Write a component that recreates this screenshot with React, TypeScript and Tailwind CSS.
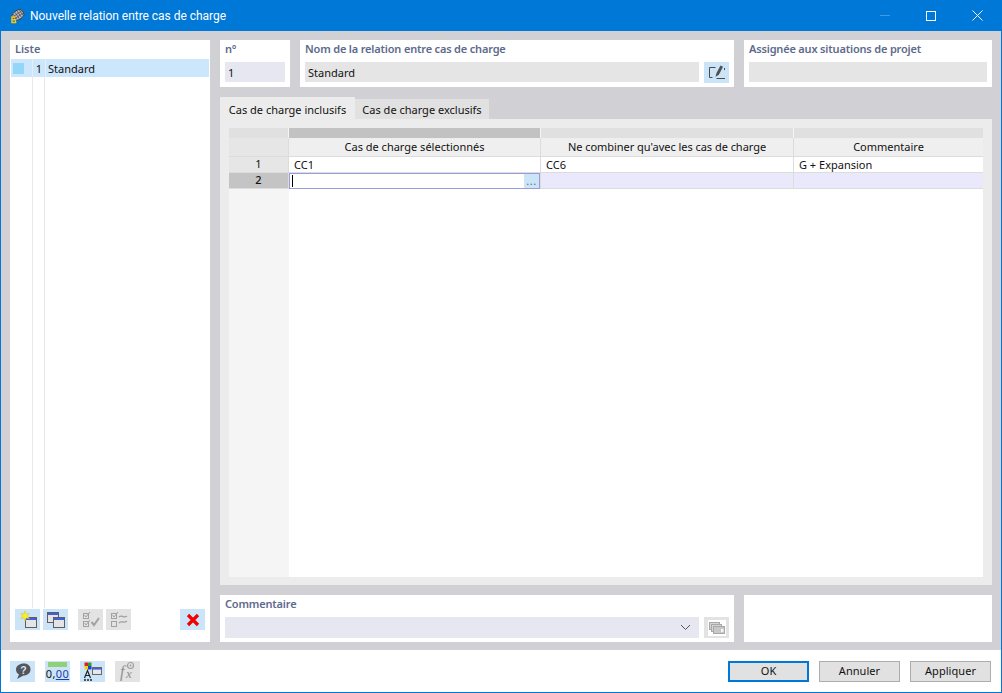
import React from "react";

const font = { fontFamily: '"Noto Sans", "Open Sans", sans-serif' };

function TitleIcon() {
  return (
    <svg width="16" height="16" viewBox="0 0 16 16">
      <g transform="rotate(-35 9 7)">
        <rect x="3" y="2.5" width="12" height="9" rx="4" fill="#b5b9c2" stroke="#3a3d42" strokeWidth="0.9" />
        <path d="M5.5 3 V11 M8 3 V11 M10.5 3 V11 M13 3 V11 M3 5.7 H15 M3 8.3 H15" stroke="#4a4d52" strokeWidth="0.7" />
      </g>
      <path d="M6.5 9 H3 V14.5 H6.5 V11.7 H3" fill="none" stroke="#f5c518" strokeWidth="1.5" />
    </svg>
  );
}

function EditIcon() {
  return (
    <svg width="20" height="18" viewBox="0 0 20 18">
      <path d="M8.5 3.5 H2.5 V13.5 H5.5" fill="none" stroke="#4a4a4a" strokeWidth="1" />
      <path d="M9.5 14.5 H18" stroke="#4a4a4a" strokeWidth="1" />
      <path d="M17.5 4 V6" stroke="#4a4a4a" strokeWidth="1" />
      <path d="M8.5 13 L9.5 9 L13.5 1.5 L16 2.8 L12 10.5 Z" fill="#505050" />
    </svg>
  );
}

function Win({ x, y }: { x: number; y: number }) {
  return (
    <g transform={`translate(${x} ${y})`}>
      <rect x="0.5" y="0.5" width="11" height="10" fill="#e4e4e4" stroke="#5e5e5e" />
      <rect x="1" y="1" width="10" height="2" fill="#3f5fe0" />
    </g>
  );
}

function NewIcon() {
  return (
    <svg width="20" height="18" viewBox="0 0 20 18">
      <Win x={7} y={6} />
      <path d="M7 0 L8.2 3 L11.5 2.4 L9.4 5 L11.5 7.8 L8.2 7 L7 10 L5.8 7 L2.5 7.8 L4.6 5 L2.5 2.4 L5.8 3 Z" fill="#f7ee2e" stroke="#c9b820" strokeWidth="0.4" />
    </svg>
  );
}

function CopyIcon() {
  return (
    <svg width="20" height="18" viewBox="0 0 20 18">
      <Win x={1} y={1} />
      <Win x={7} y={6} />
    </svg>
  );
}

function CheckAllIcon() {
  return (
    <svg width="20" height="18" viewBox="0 0 20 18" fill="none" stroke="#a2a2a2" strokeWidth="1">
      <rect x="2.5" y="2.5" width="5" height="5" />
      <rect x="2.5" y="10.5" width="5" height="5" />
      <path d="M3.5 4 L5 6 L9 1 M3.5 12 L5 14 L9 9" />
      <path d="M10.5 11 L13 14 L18 7" strokeWidth="2" />
    </svg>
  );
}

function CheckSwapIcon() {
  return (
    <svg width="20" height="18" viewBox="0 0 20 18" fill="none" stroke="#a2a2a2" strokeWidth="1">
      <rect x="2.5" y="2.5" width="5" height="5" />
      <rect x="2.5" y="10.5" width="5" height="5" />
      <path d="M3.5 4 L5 6 L9 1" />
      <path d="M10 6 C13 3 14 8 18 5 M10 12 C13 9 14 13 18 10" strokeWidth="1.4" />
    </svg>
  );
}

function RedX() {
  return (
    <svg width="14" height="14" viewBox="0 0 14 14">
      <path d="M2 2 L12 12 M12 2 L2 12" stroke="#f00000" strokeWidth="3.2" />
    </svg>
  );
}

function HelpIcon() {
  return (
    <svg width="18" height="18" viewBox="0 0 18 18">
      <path d="M10 1.5 C14 1.5 16.5 4 16.5 7.5 C16.5 11 13.5 13.5 9.5 13.5 L3 17 L5 12.5 C3 11.5 2 9.5 2 7.5 C2 4 5.5 1.5 10 1.5 Z" fill="#55555c" />
      <text x="9.5" y="11.5" textAnchor="middle" fontSize="10.5" fontWeight="700" fill="#cbe4f9" fontFamily="Liberation Sans">?</text>
    </svg>
  );
}

function NumIcon() {
  return (
    <div className="flex flex-col items-center w-[21px] leading-none">
      <div className="w-[19px] h-[5px] bg-[#8fd07a] mb-[1px]" />
      <span className="text-[11px] leading-[12px] text-[#111] tracking-[0.4px]">
        0,<span className="text-[#1b3fa8] underline">00</span>
      </span>
    </div>
  );
}

function ColorIcon() {
  return (
    <svg width="20" height="20" viewBox="0 0 20 20">
      <rect x="1.5" y="1.5" width="3.5" height="3.5" fill="#e02020" />
      <rect x="5" y="1.5" width="3.5" height="3.5" fill="#30a030" />
      <rect x="1.5" y="5" width="3.5" height="3.5" fill="#f0d020" />
      <rect x="5" y="5" width="3.5" height="3.5" fill="#2040d0" />
      <rect x="9.5" y="6.5" width="9" height="7" fill="#e8e8e8" stroke="#666" />
      <rect x="10" y="7" width="8" height="1.6" fill="#3f5fe0" />
      <path d="M1.5 17 L4.5 9.5 L7.5 17 M2.7 14.5 H6.3" fill="none" stroke="#222" strokeWidth="1.2" />
      <path d="M1 19 H9" stroke="#222" strokeWidth="1.4" strokeDasharray="2 1" />
    </svg>
  );
}

function FxIcon() {
  return (
    <svg width="20" height="20" viewBox="0 0 20 20">
      <text x="2" y="16" fontSize="16" fontStyle="italic" fontFamily="Liberation Serif" fill="#8f8f8f">f</text>
      <text x="8" y="17" fontSize="13" fontStyle="italic" fontFamily="Liberation Serif" fill="#8f8f8f">x</text>
      <circle cx="12.5" cy="4.5" r="3" fill="none" stroke="#a0a0a0" strokeWidth="1.2" />
      <circle cx="12.5" cy="4.5" r="1" fill="#a0a0a0" />
    </svg>
  );
}

function StackIcon() {
  return (
    <svg width="18" height="16" viewBox="0 0 18 16">
      <rect x="0" y="0" width="18" height="16" fill="#ffffff" />
      <rect x="1.5" y="2.5" width="10" height="7" fill="#d4d4d4" stroke="#a8a8a8" />
      <rect x="3.5" y="4.5" width="10" height="7" fill="#d4d4d4" stroke="#a8a8a8" />
      <rect x="5.5" y="6.5" width="11" height="7" fill="#c8c8c8" stroke="#a8a8a8" />
      <rect x="13" y="9" width="2.5" height="3" fill="#f4f4f4" />
    </svg>
  );
}

function IconBtn({ children, off }: { children: React.ReactNode; off?: boolean }) {
  return (
    <div className={`w-[25px] h-[21px] flex items-center justify-center ${off ? "bg-[#e3e3e3]" : "bg-[#cce4f8]"}`}>
      {children}
    </div>
  );
}

function Label({ children }: { children: React.ReactNode }) {
  return <div className="text-[11px] leading-[14px] font-semibold tracking-[-0.18px] text-[#5d6a8c] h-[22px] pt-[2px] whitespace-nowrap">{children}</div>;
}

function Btn({ children, primary }: { children: React.ReactNode; primary?: boolean }) {
  return (
    <div
      className={`w-[81px] h-[21px] flex items-center justify-center text-[11px] tracking-[0.05px] text-[#111] bg-[#e1e1e1] ${
        primary ? "border-2 border-[#0078d7]" : "border border-[#adadad]"
      }`}
    >
      {children}
    </div>
  );
}

export default function App() {
  return (
    <div style={font} className="w-[1002px] h-[693px] flex flex-col bg-[#d1d0d5] border-x border-b border-[#0078d7] overflow-hidden text-[11px] text-[#111]">
      {/* title bar */}
      <div className="h-[31px] shrink-0 bg-[#0078d7] flex items-center text-white">
        <div className="ml-[8px] mr-[5px] mt-[1px]">
          <TitleIcon />
        </div>
        <span className="text-[12px] font-['Roboto'] tracking-[-0.03px]">Nouvelle relation entre cas de charge</span>
        <div className="ml-auto flex items-center">
          <div className="w-[46px] flex justify-center">
            <div className="w-[10px] h-px bg-[#3f9be3]" />
          </div>
          <div className="w-[46px] flex justify-center">
            <div className="w-[10px] h-[10px] border border-white" />
          </div>
          <div className="w-[46px] flex justify-center mr-[1px]">
            <svg width="11" height="11" viewBox="0 0 11 11">
              <path d="M0.5 0.5 L10.5 10.5 M10.5 0.5 L0.5 10.5" stroke="#fff" strokeWidth="1" />
            </svg>
          </div>
        </div>
      </div>

      {/* body */}
      <div className="flex-1 flex gap-[10px] pl-[9px] pr-[9px] pt-[9px] pb-[8px] min-h-0">
        {/* list */}
        <div className="w-[200px] bg-white flex flex-col px-px">
          <div className="h-[19px] pl-[4px] pt-[2px] text-[11px] leading-[14px] font-semibold text-[#5d6a8c]">Liste</div>
          <div className="h-[18px] bg-[#cce6fc] flex items-center text-[11px] text-[#111]">
            <div className="w-[11px] h-[11px] bg-[#93d6f8] ml-[2px] mr-[8px]" />
            <div className="w-px h-full bg-[#e3eef7]" />
            <span className="ml-[2px] w-[7px] text-right pt-[2px]">1</span>
            <div className="w-px h-full bg-[#e3eef7] ml-[3px]" />
            <span className="ml-[2px] pt-[2px]">Standard</span>
          </div>
          <div className="flex-1 relative flex min-h-0">
            <div className="w-[22px] border-r border-[#e8e8e8]" />
            <div className="w-[12px] border-r border-[#e8e8e8]" />
          </div>
          <div className="h-[38px] flex items-start pl-[4px] pr-[4px] pt-0 relative">
            <div className="absolute left-0 top-0 flex h-[4px]">
              <div className="w-[22px] border-r border-[#e8e8e8]" />
              <div className="w-[12px] border-r border-[#e8e8e8]" />
            </div>
            <div className="flex mt-[5px] w-full">
              <div className="flex gap-[3px]">
                <IconBtn><NewIcon /></IconBtn>
                <IconBtn><CopyIcon /></IconBtn>
              </div>
              <div className="flex gap-[3px] ml-[10px]">
                <IconBtn off><CheckAllIcon /></IconBtn>
                <IconBtn off><CheckSwapIcon /></IconBtn>
              </div>
              <div className="ml-auto">
                <IconBtn><RedX /></IconBtn>
              </div>
            </div>
          </div>
        </div>

        {/* right */}
        <div className="flex-1 flex flex-col min-w-0">
          <div className="h-[47px] flex gap-[10px] shrink-0">
            <div className="w-[70px] bg-white px-[5px]">
              <Label>n°</Label>
              <div className="h-[20px] bg-[#e7e7f1] pl-[3px] pt-[2px] flex items-center">1</div>
            </div>
            <div className="w-[434px] bg-white px-[5px]">
              <Label>Nom de la relation entre cas de charge</Label>
              <div className="flex gap-[5px]">
                <div className="flex-1 h-[20px] bg-[#e5e5e5] pl-[3px] pt-[2px] flex items-center">Standard</div>
                <div className="w-[25px] h-[21px] bg-[#cce4f8] flex items-center justify-center">
                  <EditIcon />
                </div>
              </div>
            </div>
            <div className="flex-1 bg-white px-[5px]">
              <Label>Assignée aux situations de projet</Label>
              <div className="h-[20px] bg-[#e5e5e5]" />
            </div>
          </div>

          {/* tabs */}
          <div className="mt-[10px] h-[22px] flex items-end shrink-0">
            <div className="h-[22px] w-[135px] bg-[#ececec] flex items-center justify-center pt-[4px] text-[11px]">Cas de charge inclusifs</div>
            <div className="h-[20px] w-[134px] bg-[#e1e1e1] flex items-center justify-center pt-[2px] text-[11px]">Cas de charge exclusifs</div>
          </div>

          <div className="h-[466px] shrink-0 bg-[#ececec] p-[9px] pb-[8px] flex flex-col">
            <div className="flex-1 flex flex-col min-h-0 text-[11px]">
              <div className="flex h-[10px] shrink-0">
                <div className="w-[60px] bg-[#e0e0e0] border-r border-[#f4f4f4]" />
                <div className="w-[252px] bg-[#c2c2c2] border-r border-[#f4f4f4]" />
                <div className="w-[253px] bg-[#e0e0e0] border-r border-[#f4f4f4]" />
                <div className="flex-1 bg-[#e0e0e0]" />
              </div>
              <div className="flex h-[19px] shrink-0 border-b border-[#dcdcdc]">
                <div className="w-[60px] bg-[#e6e6e6] border-r border-[#dcdcdc]" />
                <div className="w-[252px] bg-[#efefef] border-r border-[#dcdcdc] flex items-center justify-center">Cas de charge sélectionnés</div>
                <div className="w-[253px] bg-[#efefef] border-r border-[#dcdcdc] flex items-center justify-center tracking-[-0.04px]">Ne combiner qu'avec les cas de charge</div>
                <div className="flex-1 bg-[#efefef] flex items-center justify-center">Commentaire</div>
              </div>
              <div className="flex h-[16px] shrink-0 border-b border-[#dcdcdc] bg-white">
                <div className="w-[60px] bg-[#e6e6e6] border-r border-[#dcdcdc] flex items-center justify-center">1</div>
                <div className="w-[252px] border-r border-[#dcdcdc] pl-[5px] pt-[1px] flex items-center">CC1</div>
                <div className="w-[253px] border-r border-[#dcdcdc] pl-[5px] pt-[1px] flex items-center">CC6</div>
                <div className="flex-1 pl-[5px] pt-[1px] flex items-center">G + Expansion</div>
              </div>
              <div className="flex h-[16px] shrink-0 border-b border-[#dcdcdc] bg-[#e9e9fb]">
                <div className="w-[60px] bg-[#c4c4c4] border-r border-[#dcdcdc] flex items-center justify-center font-medium">2</div>
                <div className="w-[252px] bg-white border-r border-[#dcdcdc] h-[16px]">
                  <div className="w-[251px] h-[16px] border border-[#9c9cdc] flex items-center justify-between">
                    <div className="ml-[2px] w-px h-[12px] bg-black" />
                    <div className="w-[15px] h-[14px] bg-[#cce4f8] text-[#5a6a80] text-[11px] leading-[14px] text-center tracking-[0.5px]">...</div>
                  </div>
                </div>
                <div className="w-[253px] border-r border-[#dcdcdc]" />
                <div className="flex-1" />
              </div>
              <div className="flex-1 flex min-h-0 bg-white">
                <div className="w-[60px] bg-[#f5f5f5]" />
                <div className="flex-1" />
              </div>
            </div>
          </div>

          {/* comment */}
          <div className="mt-[10px] h-[47px] flex gap-[10px] shrink-0">
            <div className="w-[514px] bg-white px-[5px]">
              <Label>Commentaire</Label>
              <div className="flex gap-[5px]">
                <div className="flex-1 h-[21px] bg-[#e7e7f1] flex items-center justify-end pr-[8px]">
                  <svg width="11" height="7" viewBox="0 0 11 7">
                    <path d="M1 1 L5.5 5.5 L10 1" fill="none" stroke="#555" strokeWidth="1" />
                  </svg>
                </div>
                <div className="w-[25px] h-[21px] bg-[#e3e3e3] flex items-center justify-center">
                  <StackIcon />
                </div>
              </div>
            </div>
            <div className="flex-1 bg-white" />
          </div>
        </div>
      </div>

      {/* footer */}
      <div className="h-[42px] shrink-0 bg-white flex items-center pl-[9px] pr-[10px]">
        <div className="flex gap-[10px]">
          <IconBtn><HelpIcon /></IconBtn>
          <IconBtn><NumIcon /></IconBtn>
          <IconBtn><ColorIcon /></IconBtn>
          <IconBtn off><FxIcon /></IconBtn>
        </div>
        <div className="ml-auto flex gap-[10px]">
          <Btn primary>OK</Btn>
          <Btn>Annuler</Btn>
          <Btn>Appliquer</Btn>
        </div>
      </div>
    </div>
  );
}
